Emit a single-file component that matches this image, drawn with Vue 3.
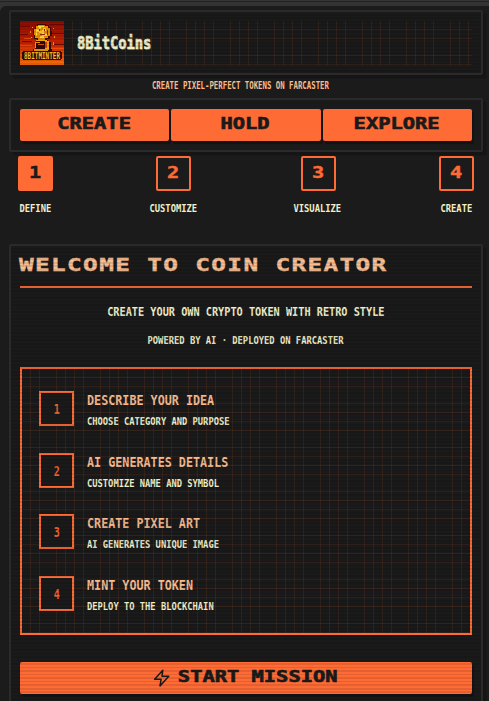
<script setup>
const tabs = ['CREATE', 'HOLD', 'EXPLORE']
const steps = [
  { n: 1, label: 'DEFINE', active: true },
  { n: 2, label: 'CUSTOMIZE', wide: true },
  { n: 3, label: 'VISUALIZE', wide: true },
  { n: 4, label: 'CREATE' },
]
const features = [
  { title: 'DESCRIBE YOUR IDEA', text: 'CHOOSE CATEGORY AND PURPOSE' },
  { title: 'AI GENERATES DETAILS', text: 'CUSTOMIZE NAME AND SYMBOL' },
  { title: 'CREATE PIXEL ART', text: 'AI GENERATES UNIQUE IMAGE' },
  { title: 'MINT YOUR TOKEN', text: 'DEPLOY TO THE BLOCKCHAIN' },
]
</script>

<template>
  <div class="frame">
    <div class="page">
      <header class="panel header scan">
        <div class="header-grid">
          <svg class="logo" viewBox="0 0 44 44" shape-rendering="crispEdges">
            <defs>
              <linearGradient id="sky" x1="0" y1="0" x2="0" y2="1">
                <stop offset="0" stop-color="#8e0c00" />
                <stop offset=".5" stop-color="#c52300" />
                <stop offset=".75" stop-color="#e94c05" />
                <stop offset="1" stop-color="#f36a0c" />
              </linearGradient>
            </defs>
            <rect width="44" height="44" fill="url(#sky)" />
            <path d="M0 5h10v1H0zM30 3h14v1H30zM0 13h8v1H0zM32 12h12v1H32zM2 20h10v1H2zM34 23h10v1H34z" fill="#6f0700" />
            <path d="M0 24h12v1H0zM31 27h13v1H31zM4 17h7v1H4z" fill="#ef4d07" />
            <path d="M17 3h9v1h3v2h2v4h1v5h-2v3h-3v2H17v-2h-3v-4h-1V8h2V5h2z" fill="#3d0b04" />
            <path d="M18 4h7v1h3v2h2v8h-2v2h-3v2h-7v-2h-3v-3h-1V8h2V5h2z" fill="#f08c0c" />
            <path d="M18 5h6v1h-6zM16 8h3V6h2v2h-2v3h-2v4h-1zM23 7h3v3h-2v3h3v2h-3v2h-4v-2h2v-3h-3v-2h3V9h1z" fill="#ffd834" />
            <path d="M19 8h1v2h-1zM24 8h1v2h-1zM20 13h5v1h-5zM27 9h1v5h-1z" fill="#8f2504" />
            <path d="M16 19h12v2h3v7h1v2H13v-2h2v-7h1z" fill="#310806" />
            <path d="M16 19h11v1H16zM15 21h5v1h-5zM25 20h4v9h-4zM14 28h14v2H14zM15 22h1v5h-1z" fill="#efa314" />
            <path d="M18 23h6v1h-6z" fill="#c85409" />
            <path d="M25 21h2v6h-2z" fill="#d8420a" />
            <path d="M10 10h1v2h-1zM11 16h1v1h-1zM33 7h1v1h-1zM34 15h1v2h-1zM33 21h1v3h-1zM12 6h1v1h-1z" fill="#f6a014" />
            <path d="M3 30h38v1h1v7h-1v1H3v-1H2v-7h1z" fill="#3b0903" />
            <text x="4" y="37.5" textLength="36" lengthAdjust="spacingAndGlyphs" class="logo-text">8BITMINTER</text>
          </svg>
          <div class="brand"><span>8BitCoins</span></div>
        </div>
      </header>

      <p class="tagline"><span>CREATE PIXEL-PERFECT TOKENS ON FARCASTER</span></p>

      <nav class="panel nav">
        <button v-for="tab in tabs" :key="tab" class="btn"><span class="wide-text">{{ tab }}</span></button>
      </nav>

      <div class="steps">
        <div v-for="s in steps" :key="s.n" class="step" :class="{ active: s.active, broad: s.wide }">
          <div class="step-box"><span>{{ s.n }}</span></div>
          <div class="step-label"><span class="small-text">{{ s.label }}</span></div>
        </div>
      </div>

      <main class="panel main scan">
        <h1><span>WELCOME TO COIN CREATOR</span></h1>
        <p class="lead"><span>CREATE YOUR OWN CRYPTO TOKEN WITH RETRO STYLE</span></p>
        <p class="sub"><span class="small-text">POWERED BY AI · DEPLOYED ON FARCASTER</span></p>
        <section class="features">
          <div v-for="(f, i) in features" :key="f.title" class="feature">
            <div class="num"><span>{{ i + 1 }}</span></div>
            <div class="copy">
              <div class="feature-title"><span>{{ f.title }}</span></div>
              <div class="feature-text"><span class="small-text">{{ f.text }}</span></div>
            </div>
          </div>
        </section>
        <button class="btn start">
          <svg class="bolt" viewBox="0 0 18 18" fill="none" stroke="#1a1a1a" stroke-width="1.5" stroke-linejoin="round">
            <path d="M9.8 1.3 1.6 10.3h6.5L7 16.9l8.8-9.7H9z" />
          </svg>
          <span class="start-label"><span class="wide-text">START MISSION</span></span>
        </button>
      </main>
    </div>
  </div>
</template>

<style>
body {
  background: #1a1a1a;
  overflow: hidden;
}
</style>

<style scoped>
* {
  box-sizing: border-box;
  margin: 0;
}
.frame {
  height: 701px;
  overflow: hidden;
  background: linear-gradient(#353535 0 1px, #222 1px 2px, #333 2px);
  padding-top: 6px;
  font-family: "DejaVu Sans Mono", monospace;
  font-weight: bold;
  color: #f0efca;
}
.page {
  height: 800px;
  padding: 4px 6px 0 9px;
  background: #1b1b1b;
  border-radius: 6px 0 0 0;
}
span {
  display: inline-block;
  white-space: pre;
}
.panel {
  border: 2px solid #2a2a2a;
  border-radius: 2px;
  background: #1a1a1a;
  box-shadow: 3.5px 3.5px 0 rgba(0, 0, 0, .2);
  padding: 9px;
}
.scan {
  position: relative;
}
.scan::after {
  content: "";
  position: absolute;
  inset: 0;
  pointer-events: none;
  background: repeating-linear-gradient(transparent 0 1.76px, rgba(0, 0, 0, .1) 1.76px 3.52px);
}
.header-grid,
.features {
  background-image:
    repeating-linear-gradient(90deg, transparent 0 7.92px, rgba(255, 107, 53, .1) 7.92px 8.8px),
    repeating-linear-gradient(transparent 0 7.92px, rgba(255, 107, 53, .1) 7.92px 8.8px);
}
.header {
  height: 65px;
}
.header-grid {
  height: 44px;
  display: flex;
  align-items: center;
}
.logo {
  width: 44px;
  height: 44px;
  flex: none;
}
.logo-text {
  font: bold 8px "DejaVu Sans Mono", monospace;
  fill: #ffc52e;
}
.brand {
  margin-left: 12.5px;
  font-size: 17px;
  line-height: 44px;
  -webkit-text-stroke: .6px #f0efca;
  text-shadow: 1px 1px 0 rgba(240, 239, 202, .3);
}
.brand span {
  transform: scaleX(.805);
  transform-origin: left;
}
.tagline {
  height: 23px;
  line-height: 22px;
  font-size: 10px;
  display: flex;
  justify-content: center;
  padding-right: 11px;
  color: #fcbb8b;
}
.tagline span {
  transform: scaleX(.735);
}
.nav {
  height: 54px;
  display: flex;
  gap: 2px;
}
.btn {
  flex: 1;
  height: 32px;
  padding: 0;
  border: 0;
  border-radius: 2px;
  background: #ff6b35;
  box-shadow: 2px 3px 0 rgba(0, 0, 0, .25);
  color: #1a1a1a;
  font: bold 15px/30px "DejaVu Sans Mono", monospace;
  display: flex;
  align-items: flex-start;
  justify-content: center;
}
.wide-text {
  transform: translateX(-1px) scaleX(1.36);
  -webkit-text-stroke: .6px #1a1a1a;
}
.small-text {
  font-size: 11px;
  transform: scaleX(.8);
}
.steps {
  display: flex;
  justify-content: space-between;
  height: 92px;
  padding: 4px 9px 0;
}
.step {
  width: 35px;
  display: flex;
  flex-direction: column;
  align-items: center;
}
.broad {
  width: 47.5px;
}
.step-box {
  width: 35px;
  height: 35px;
  border: 2px solid #ff6b35;
  border-radius: 2px;
  color: #ff6b35;
  font-size: 15px;
  line-height: 30px;
  text-align: center;
}
.step-box span {
  transform: translateX(-.5px) scaleX(1.35);
  -webkit-text-stroke: .4px currentColor;
}
.active .step-box {
  background: #ff6b35;
  color: #1a1a1a;
}
.step-label {
  margin-top: 10px;
  line-height: 15px;
  font-size: 11px;
}
.step-label span {
  transform: translateX(-.5px) scaleX(.8);
}
.main {
  height: 520px;
}
h1 {
  height: 33px;
  border-bottom: 2px solid #ff6b35;
  font-size: 18px;
  line-height: 20px;
  color: #f9c096;
}
h1 span {
  letter-spacing: 1px;
  transform: translateX(-1px) scaleX(1.354);
  transform-origin: left;
  -webkit-text-stroke: .4px #f9c096;
}
.lead,
.sub {
  display: flex;
  justify-content: center;
}
.lead {
  margin-top: 15px;
  font-size: 12px;
  line-height: 19px;
}
.lead span {
  transform: translateX(.3px) scaleX(.853);
}
.sub {
  margin-top: 10px;
  line-height: 18px;
  font-size: 11px;
}
.features {
  margin-top: 17px;
  height: 268px;
  border: 2px solid #ff6b35;
  padding: 22px 17px;
  display: flex;
  flex-direction: column;
  gap: 26.6px;
}
.feature {
  height: 35px;
  display: flex;
  gap: 13px;
}
.num {
  width: 35px;
  height: 35px;
  flex: none;
  border: 2px solid #ff6b35;
  background: #1a1a1a;
  color: #f0602f;
  text-align: center;
  font-size: 14px;
  line-height: 33px;
}
.num span {
  transform: translateX(.5px) scaleX(.72);
}
.feature-title {
  height: 20px;
  font-size: 14px;
  line-height: 19px;
  color: #f6bb8f;
}
.feature-title span {
  transform: scaleX(.838);
  transform-origin: left;
}
.feature-text {
  height: 20px;
  font-size: 11px;
  line-height: 21px;
}
.feature-text span {
  transform-origin: left;
  transform: scaleX(.797);
}
.start {
  width: 100%;
  margin-top: 27px;
}
.bolt {
  width: 18px;
  height: 18px;
  margin: 7px 7px 0 0;
}
.start-label {
  width: 161px;
  display: flex;
  justify-content: center;
}
</style>
